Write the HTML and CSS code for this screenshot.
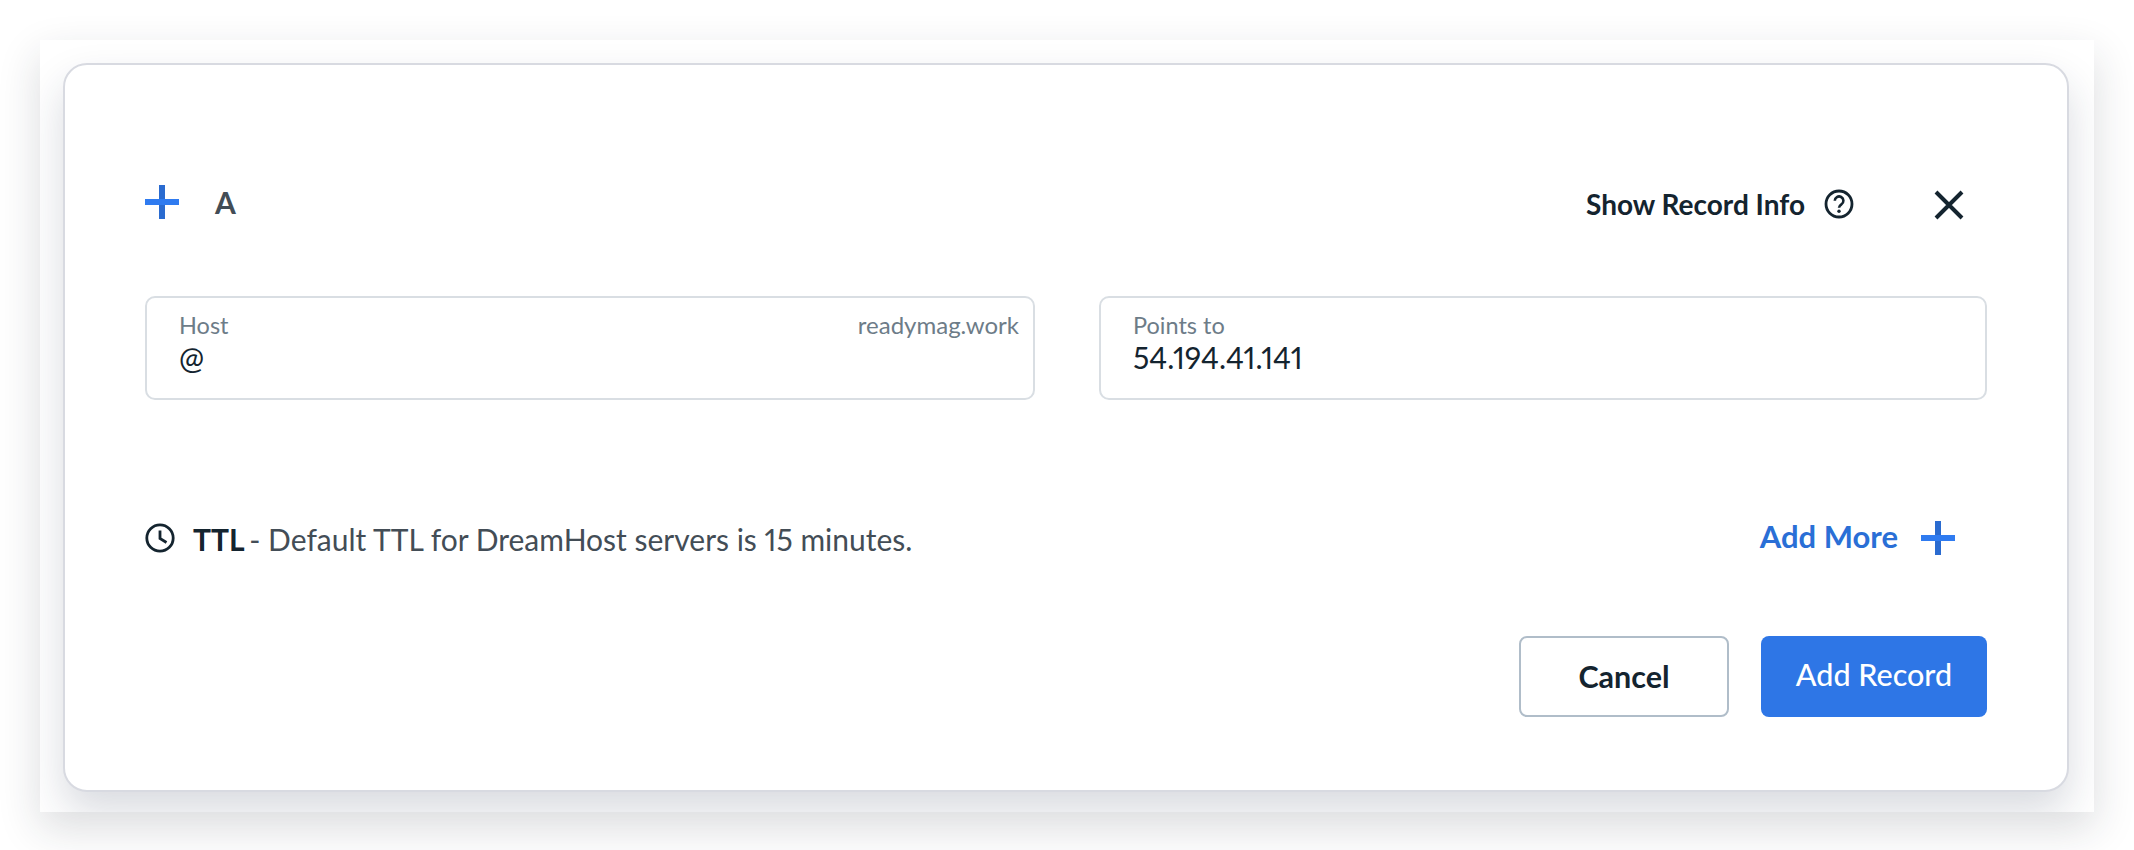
FILE: index.html
```html
<!DOCTYPE html>
<html lang="en">
<head>
    <meta charset="UTF-8">
    <meta name="viewport" content="width=device-width, initial-scale=1.0">
    <title>Add Record</title>
    <link rel="stylesheet" href="styles.css">
</head>
<body>

    <div class="panel">
        <div class="card">

            <div class="card__head">
                <svg class="plus" viewBox="0 0 34 34" aria-hidden="true">
                    <rect class="plus__v" x="14" y="0" width="6" height="34"></rect>
                    <rect class="plus__h" x="0" y="14" width="34" height="6"></rect>
                </svg>
                <div class="card__type">A</div>
                <div class="info">
                    <span>Show Record Info</span>
                    <svg class="info__icon" viewBox="0 0 30 30" aria-hidden="true">
                        <circle cx="15" cy="15" r="13" fill="none" stroke="#14242f" stroke-width="2.8"></circle>
                        <path d="M10.8 11.8a4.3 4.3 0 1 1 6.6 3.6c-1.5 1-2.4 1.7-2.4 3.4" fill="none" stroke="#14242f" stroke-width="2.6"></path>
                        <circle cx="15" cy="22.2" r="1.7" fill="#14242f"></circle>
                    </svg>
                </div>
                <svg class="close" viewBox="0 0 30 30" aria-hidden="true">
                    <path d="M2 2L28 28M28 2L2 28" fill="none" stroke="#14242f" stroke-width="4"></path>
                </svg>
            </div>

            <div class="fields">
                <div class="field">
                    <div class="field__top">
                        <span class="field__label">Host</span>
                        <span class="field__suffix">readymag.work</span>
                    </div>
                    <div class="field__value">@</div>
                </div>
                <div class="field">
                    <div class="field__top">
                        <span class="field__label">Points to</span>
                    </div>
                    <div class="field__value">54.194.41.141</div>
                </div>
            </div>

            <div class="ttl">
                <svg class="ttl__icon" viewBox="0 0 30 30" aria-hidden="true">
                    <circle cx="15" cy="15" r="13.2" fill="none" stroke="#14242f" stroke-width="2.8"></circle>
                    <path d="M15 7.5V15.5L21.5 19.5" fill="none" stroke="#14242f" stroke-width="2.8"></path>
                </svg>
                <div class="ttl__text"><b>TTL</b> - Default TTL for DreamHost servers is 15 minutes.</div>
                <div class="add-more">
                    <span class="add-more__text">Add More</span>
                    <svg class="plus" viewBox="0 0 34 34" aria-hidden="true">
                        <rect class="plus__v" x="14" y="0" width="6" height="34"></rect>
                        <rect class="plus__h" x="0" y="14" width="34" height="6"></rect>
                    </svg>
                </div>
            </div>

            <div class="actions">
                <button class="btn btn--ghost">Cancel</button>
                <button class="btn btn--primary">Add Record</button>
            </div>

        </div>
    </div>

</body>
</html>
```

FILE: styles.css
```css
html, body {
    height: 100%;
}

body {
    margin: 0;
    padding: 40px 40px 0 40px;
    box-sizing: border-box;
    height: 850px;
    overflow: hidden;
    background-color: #fff;
    font-family: Lato, "Open Sans", sans-serif;
    font-variant-numeric: proportional-nums;
    color: #14242f;
}

.panel {
    height: 772px;
    padding: 23px 25px 20px 23px;
    box-sizing: border-box;
    overflow: hidden;
    background-color: #fff;
    box-shadow: 0 16px 40px rgba(30, 35, 50, 0.16);
}

.card {
    height: 729px;
    padding: 117px 80px 0 80px;
    box-sizing: border-box;
    background-color: #fff;
    border: 2px solid #d8dae1;
    border-radius: 24px;
    box-shadow: 0 20px 40px rgba(30, 40, 70, 0.17);
}

.card__head {
    display: flex;
    align-items: center;
    height: 40px;
}

.plus {
    display: block;
    width: 34px;
    height: 34px;
    flex-shrink: 0;
}

.plus__v {
    fill: #2a6bd0;
}

.plus__h {
    fill: #2f7bf0;
}

.card__type {
    margin-left: 36px;
    font-size: 30px;
    font-weight: 700;
    color: #434d56;
}

.info {
    display: flex;
    align-items: center;
    gap: 19px;
    margin-left: auto;
    margin-top: 4px;
    font-size: 28px;
    font-weight: 700;
}

.info__icon {
    width: 30px;
    height: 30px;
}

.close {
    width: 30px;
    height: 30px;
    margin-top: 5px;
    margin-left: 80px;
    margin-right: 23px;
}

.fields {
    display: grid;
    grid-template-columns: 890px 1fr;
    gap: 64px;
    margin-top: 74px;
}

.field {
    height: 104px;
    padding: 13px 14px 0 32px;
    box-sizing: border-box;
    border: 2px solid #d9dee3;
    border-radius: 10px;
}

.field__top {
    display: flex;
    justify-content: space-between;
    font-size: 23.5px;
    line-height: 28px;
    color: #6d7c88;
}

.field__suffix {
    font-size: 24px;
}

.field__value {
    font-size: 30px;
    line-height: 37px;
}

.ttl {
    display: flex;
    align-items: center;
    height: 40px;
    margin-top: 119px;
    padding-right: 32px;
}

.ttl__icon {
    width: 30px;
    height: 30px;
    flex-shrink: 0;
    margin-bottom: 3px;
}

.ttl__text {
    margin-left: 18px;
    font-size: 30px;
    color: #434d56;
}

.ttl__text b {
    margin-right: -3px;
    color: #14242f;
}

.add-more {
    display: flex;
    align-items: center;
    gap: 23px;
    margin-left: auto;
    margin-top: -2px;
    font-size: 31px;
    font-weight: 700;
    color: #2a6fd6;
}

.add-more__text {
    margin-bottom: 5px;
}

.actions {
    display: flex;
    justify-content: flex-end;
    gap: 32px;
    margin-top: 77px;
}

.btn {
    height: 81px;
    box-sizing: border-box;
    border-radius: 8px;
    font-family: inherit;
    font-size: 30.5px;
    font-weight: 700;
}

.btn--ghost {
    width: 210px;
    padding: 0 0 2px;
    border: 2px solid #b0bdc9;
    background-color: #fff;
    color: #14242f;
}

.btn--primary {
    width: 226px;
    padding: 0 0 5px;
    border: 0;
    background-color: #2e76e6;
    font-weight: 500;
    color: #fff;
}
```
